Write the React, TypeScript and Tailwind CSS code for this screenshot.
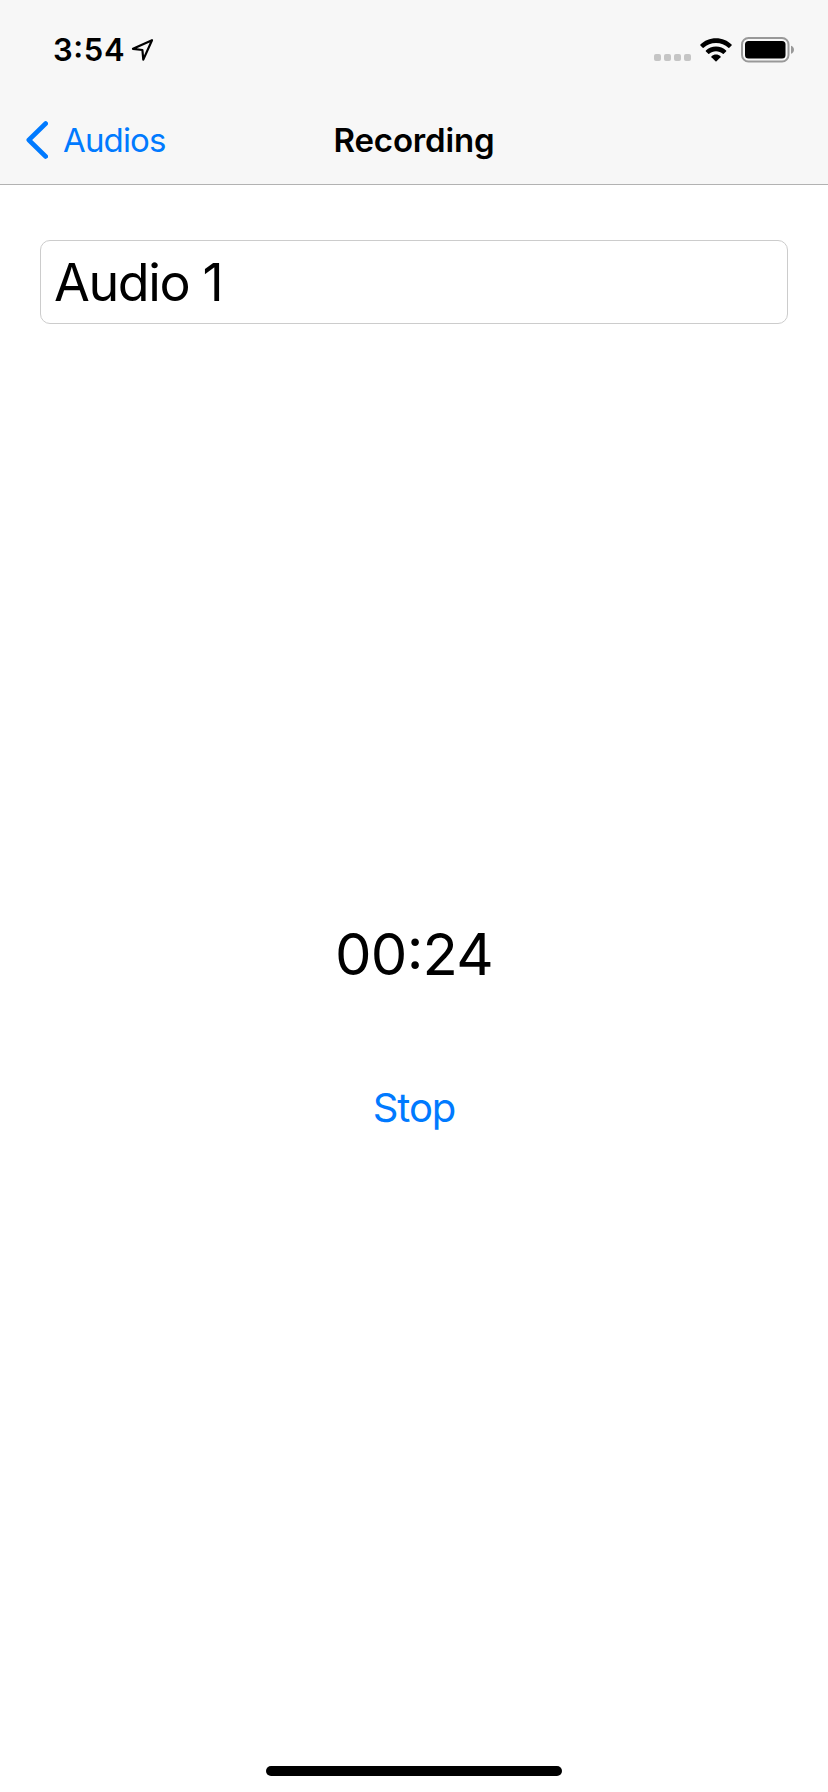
function LocationArrow() {
  return (
    <svg className="ml-2 h-6 w-6" viewBox="0 0 24 24" fill="none" aria-hidden="true">
      <path
        d="M21 2.2 2 10.8 11.4 12 12.3 21.6Z"
        stroke="#000"
        strokeWidth="2.2"
        strokeLinejoin="round"
      />
    </svg>
  );
}

function Wifi() {
  return (
    <svg className="ml-[9px] h-6 w-8" viewBox="0 0 32 24" aria-hidden="true">
      <path d="M16 0.2C22.2 0.2 27.7 2.6 31.6 6.5Q32 7 31.6 7.4L29.3 9.7Q28.9 10.1 28.4 9.7C25.1 6.7 20.8 5 16 5S6.9 6.7 3.6 9.7Q3.1 10.1 2.7 9.7L0.4 7.4Q0 7 0.4 6.5C4.300 2.6 9.800 0.2 16 0.2Z" />
      <path d="M16 8.500C19.900 8.500 23.500 10 26.100 12.500Q26.600 13 26.100 13.400L23.700 15.800Q23.300 16.200 22.800 15.800C21 14.200 18.600 13.200 16 13.200S11 14.200 9.200 15.800Q8.700 16.200 8.300 15.800L5.900 13.400Q5.400 13 5.900 12.500C8.500 10 12.100 8.500 16 8.500Z" />
      <path d="M16 16.600C17.700 16.600 19.300 17.200 20.500 18.300Q20.900 18.800 20.500 19.200L16.500 23.200Q16 23.700 15.500 23.200L11.500 19.200Q11.100 18.800 11.500 18.300C12.700 17.200 14.300 16.600 16 16.600Z" />
    </svg>
  );
}

function Battery() {
  return (
    <svg className="ml-[9px] h-[26px] w-[54px]" viewBox="0 0 54 26" aria-hidden="true">
      <rect x="1" y="1" width="46.500" height="23.500" rx="6.500" fill="none" stroke="#999" strokeWidth="2" />
      <rect x="4" y="4" width="40.500" height="17.500" rx="3.500" />
      <path d="M50 8.800C51.800 9.400 53 10.900 53 12.800S51.800 16.200 50 16.800Z" fill="#999" />
    </svg>
  );
}

function StatusBar() {
  return (
    <div className="flex h-24 items-center justify-between pt-1 pr-[33px] pl-[53px]">
      <div className="flex items-center">
        <span className="w-[70px] text-[31px] leading-10 font-semibold tracking-[0.6px] whitespace-nowrap [font-feature-settings:'case']">3:54</span>
        <LocationArrow />
      </div>
      <div className="flex items-center">
        <div className="mt-[15px] flex gap-[3px]">
          {[0, 1, 2, 3].map((dot) => (
            <span key={dot} className="size-[7px] rounded-[2px] bg-[#c5c5c5]" />
          ))}
        </div>
        <Wifi />
        <Battery />
      </div>
    </div>
  );
}

function NavBar() {
  return (
    <nav className="grid h-[88px] grid-cols-3 items-center">
      <button className="flex items-center pl-[26px] text-[#007aff]">
        <svg className="h-[38px] w-[22px]" viewBox="0 0 22 38" fill="none" aria-hidden="true">
          <path d="M19.700 2.500 2.800 19 19.700 35.500" stroke="currentColor" strokeWidth="4.600" strokeLinecap="round" strokeLinejoin="round" />
        </svg>
        <span className="ml-[15px] text-[33px] leading-10 tracking-[-0.85px]">Audios</span>
      </button>
      <h1 className="text-center text-[33px] leading-10 font-semibold tracking-[-0.15px]">Recording</h1>
    </nav>
  );
}

export default function App() {
  return (
    <div className="flex h-[1792px] w-[828px] flex-col bg-white font-['Inter',sans-serif] text-black">
      <header className="h-[185px] shrink-0 border-b border-[#b2b2b2] bg-[#f7f7f7]">
        <StatusBar />
        <NavBar />
      </header>
      <main className="flex flex-1 flex-col items-center px-10 pt-[55px]">
        <input
          type="text"
          aria-label="Recording name"
          defaultValue="Audio 1"
          className="h-[84px] w-full rounded-[10px] border border-[#cccccc] bg-white px-[13px] text-[52px] tracking-[-1.4px] outline-none"
        />
        <time className="mt-[590px] text-[58px] leading-[80px] tracking-[-0.8px] [font-feature-settings:'case']">00:24</time>
        <button className="mt-[84px] text-[40px] leading-[60px] tracking-[-1.1px] text-[#007aff]">Stop</button>
      </main>
      <div className="mb-4 h-[10px] w-[296px] shrink-0 self-center rounded-full bg-black" />
    </div>
  );
}
